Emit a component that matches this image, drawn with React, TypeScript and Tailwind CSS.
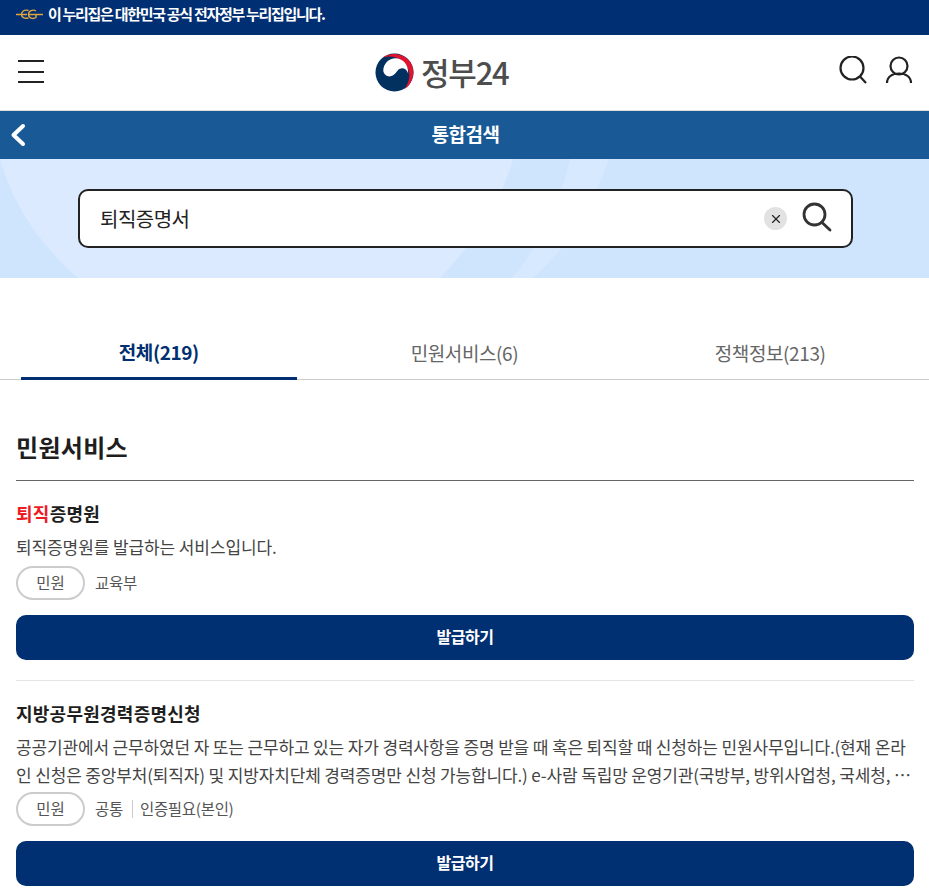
import { X } from "lucide-react";

const font = "[font-family:'Noto_Sans_CJK_KR','Noto_Sans',sans-serif]";

const Logo = () => (
    <svg viewBox="0 0 40 40" className="w-[39px] h-[39px]">
        <circle cx="20" cy="20" r="19.5" fill="#02305f" />
        <path d="M8 4.500 C15 -.5 26 -.5 33 6 C39 11 41 20 38 27 C36.500 31.500 33.500 35.500 30 37 C34 32 36 26 35 20 C33.500 10 24 3 14 3.500 C11.500 3.700 9.500 4 8 4.500 Z" fill="#e2132e" />
        <path d="M8.500 18.500 C8.500 11 14.500 5.500 21 5.500 C28.500 5.500 34.500 12 34 21 C32.500 16.500 28.500 14.500 25 16.500 C22 18.500 20 24 15 24 C11.500 24 9 21.500 8.500 18.500 Z" fill="#ffffff" />
    </svg>
);

const Badge = () => (
    <span className="flex items-center justify-center w-[69px] h-[34px] rounded-full border-2 border-[#cccccc] text-[15.5px] text-[#555555]">
        민원
    </span>
);

const IssueButton = () => (
    <button className="w-full h-[45px] pb-[3px] rounded-[10px] bg-[#002f72] text-white text-[16px] font-bold tracking-[-0.5px]">
        발급하기
    </button>
);

const App = () => {
    return (
        <div className={`${font} w-[929px] h-[894px] overflow-hidden bg-white text-[#1e1e1e]`}>
            {/* 누리집 안내 */}
            <div className="h-[35px] bg-[#012f73] flex items-center pl-[16px] gap-[5px] pb-[6px]">
                <svg viewBox="0 0 27 11" className="w-[27px] h-[11px]" fill="none" stroke="#e0a63f" strokeWidth="1.4">
                    <path d="M0 5.500 H11 M13 5.500 H27" />
                    <path d="M12.500 1.500 C8 0 5.500 3 5.500 5.500 C5.500 8 8.500 10 12.500 9" />
                    <path d="M20 2 C17 0 12.500 2 12.500 5.500 C12.500 9 17 10.500 20 8.500 L20 5.500" />
                </svg>
                <span className="text-[15px] font-bold text-white tracking-[-1.3px]">이 누리집은 대한민국 공식 전자정부 누리집입니다.</span>
            </div>

            {/* 헤더 */}
            <header className="h-[76px] border-b border-[#dddddd] flex items-center justify-between pl-[18px] pr-[16px] relative">
                <div className="flex flex-col gap-[8.5px] w-[26px] mt-[-2px]">
                    <span className="h-[2px] bg-[#222222]" />
                    <span className="h-[2px] bg-[#222222]" />
                    <span className="h-[2px] bg-[#222222]" />
                </div>
                <div className="absolute left-[375px] top-[18px] flex items-center gap-[7px]">
                    <Logo />
                    <span className="text-[31px] font-medium tracking-[-1.2px] text-[#4d4d4d] leading-none mt-[-3px]">정부24</span>
                </div>
                <div className="flex items-center gap-[18px] mt-[-5px]">
                    <svg viewBox="0 0 28 28" className="w-[28px] h-[28px]" fill="none" stroke="#222222" strokeWidth="2.2">
                        <circle cx="13" cy="12" r="11.500" />
                        <path d="M21 20.500 L27 27" />
                    </svg>
                    <svg viewBox="0 0 28 28" className="w-[28px] h-[28px]" fill="none" stroke="#222222" strokeWidth="2.2">
                        <circle cx="14" cy="10" r="8.500" />
                        <path d="M2 27 C2 21 7 17.500 14 17.500 C21 17.500 26 21 26 27" />
                    </svg>
                </div>
            </header>

            {/* 타이틀 */}
            <div className="h-[48px] bg-[#195a96] flex items-center justify-center relative">
                <svg viewBox="0 0 16 24" className="absolute left-[10px] top-[12px] w-[16px] h-[24px]" fill="none" stroke="#ffffff" strokeWidth="4" strokeLinecap="round" strokeLinejoin="round">
                    <path d="M13 3 L3.500 12 L13 21" />
                </svg>
                <h1 className="text-[19px] font-bold text-white tracking-[-0.5px] mt-[-2px] ml-[2px]">통합검색</h1>
            </div>

            {/* 검색 */}
            <div className="h-[119px] bg-[#cfe5fe] flex items-center justify-center relative overflow-hidden">
                <svg viewBox="0 0 929 119" className="absolute inset-0 w-full h-full">
                    <path d="M0 0 H513 C506 24 490 66 440 119 H78 C40 85 15 50 0 0 Z" fill="#dbeaff" />
                    <path d="M570 0 H609 C600 24 585 72 533 119 H512 C540 85 560 45 570 0 Z" fill="#d7e9ff" />
                </svg>
                <div className="relative z-10 ml-[2px] w-[775px] h-[59px] bg-white border-2 border-[#222222] rounded-[10px] flex items-center pl-[20px] pr-[19px]">
                    <span className="flex-1 text-[20px] tracking-[-0.5px] text-[#222222]">퇴직증명서</span>
                    <span className="w-[23px] h-[23px] rounded-full bg-[#e2e2e2] flex items-center justify-center mr-[15px]">
                        <X className="w-[14px] h-[14px] text-[#222222]" strokeWidth={2} />
                    </span>
                    <svg viewBox="0 0 30 30" className="w-[30px] h-[30px] mt-[-3px]" fill="none" stroke="#333333" strokeWidth="2.8" strokeLinecap="round">
                        <circle cx="12.500" cy="12.500" r="10.500" />
                        <path d="M20 20.500 L28 28" />
                    </svg>
                </div>
            </div>

            {/* 탭 */}
            <div className="mt-[54px] h-[48px] border-b border-[#cccccc] grid grid-cols-3 px-[6px] text-[19px] tracking-[-0.4px]">
                <div className="mx-[15px] border-b-[3px] border-[#002f72] h-[48px] flex items-center justify-center font-bold text-[#002f72] pb-[5px]">전체(219)</div>
                <div className="mx-[15px] flex items-center justify-center text-[#666666] pb-[5px]">민원서비스(6)</div>
                <div className="mx-[15px] flex items-center justify-center text-[#666666] pb-[5px]">정책정보(213)</div>
            </div>

            <main className="px-[16px] pr-[15px]">
                <h2 className="mt-[49px] h-[52px] border-b border-[#666666] text-[24px] font-bold leading-[36px] tracking-[0.3px] text-[#1e1e1e]">민원서비스</h2>

                {/* 결과 1 */}
                <section className="pt-[19px] pb-[20px] border-b border-[#e5e5e5]">
                    <h3 className="text-[18px] font-bold leading-[26px] tracking-[0.25px]"><span className="text-[#ed1c24]">퇴직</span>증명원</h3>
                    <p className="mt-[7px] text-[17px] leading-[28px] tracking-[-0.1px] text-[#444444]">퇴직증명원를 발급하는 서비스입니다.</p>
                    <div className="mt-[5px] flex items-center gap-[10px]">
                        <Badge />
                        <span className="text-[15.5px] tracking-[-0.3px] text-[#555555]">교육부</span>
                    </div>
                    <div className="mt-[15px]"><IssueButton /></div>
                </section>

                {/* 결과 2 */}
                <section className="pt-[19px]">
                    <h3 className="text-[18px] font-bold leading-[26px] tracking-[0.25px]">지방공무원경력증명신청</h3>
                    <div className="mt-[7px] text-[17px] leading-[28px] tracking-[-0.15px] text-[#444444]">
                        <p className="whitespace-nowrap">공공기관에서 근무하였던 자 또는 근무하고 있는 자가 경력사항을 증명 받을 때 혹은 퇴직할 때 신청하는 민원사무입니다.(현재 온라</p>
                        <p className="truncate">인 신청은 중앙부처(퇴직자) 및 지방자치단체 경력증명만 신청 가능합니다.) e-사람 독립망 운영기관(국방부, 방위사업청, 국세청, 경찰청</p>
                    </div>
                    <div className="mt-[3px] flex items-center gap-[10px]">
                        <Badge />
                        <span className="text-[15.5px] tracking-[-0.3px] text-[#555555]">공통</span>
                        <span className="w-px h-[18px] bg-[#cccccc] ml-[-1px] mr-[-3px]" />
                        <span className="text-[15.5px] tracking-[-0.3px] text-[#555555]">인증필요(본인)</span>
                    </div>
                    <div className="mt-[15px]"><IssueButton /></div>
                </section>
            </main>
        </div>
    );
};

export default App;
